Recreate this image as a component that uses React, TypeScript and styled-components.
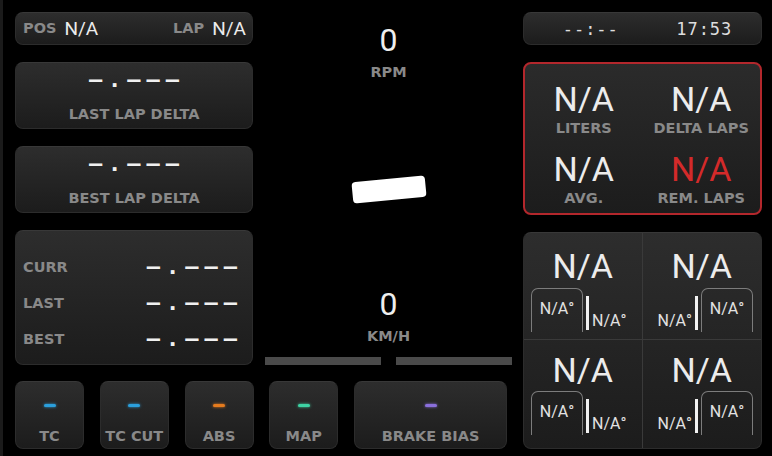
import React from 'react'
import styled, { createGlobalStyle } from 'styled-components'

const labelFont = `'DejaVu Sans', 'Liberation Sans', sans-serif`
const valueFont = `Roboto, 'Liberation Sans', sans-serif`
const monoFont = `'DejaVu Sans Mono', 'Liberation Mono', monospace`

const GlobalStyle = createGlobalStyle`
  html, body {
    margin: 0;
    padding: 0;
    background: #000;
  }
  * {
    box-sizing: border-box;
  }
`

const Dash = styled.div`
  display: flex;
  width: 772px;
  height: 456px;
  padding: 12px 10px 7px 12px;
  border-left: 3px solid #1b1b1b;
  background: #000;
  overflow: hidden;
`

const Main = styled.div`
  display: flex;
  flex-direction: column;
  gap: 16px;
  width: 497px;
`

const TopArea = styled.div`
  display: flex;
  gap: 12px;
  height: 353px;
`

const LeftCol = styled.div`
  display: flex;
  flex-direction: column;
  gap: 17px;
  width: 238px;
`

const Panel = styled.div`
  background: linear-gradient(180deg, #2d2d2d 0%, #1c1c1c 100%);
  border: 1px solid #2c2c2c;
  border-top-color: #383838;
  border-radius: 8px;
`

const Label = styled.span`
  font-family: ${labelFont};
  font-weight: bold;
  font-size: 14.5px;
  line-height: 14px;
  color: #898989;
  white-space: nowrap;
`

const PosBar = styled(Panel)`
  display: flex;
  align-items: center;
  height: 33px;
  padding: 0 6px 0 7px;
`

const InlineValue = styled.span`
  margin-left: 8px;
  font-family: ${valueFont};
  font-size: 19px;
  color: #ececec;
`

const Spacer = styled.div`
  flex: 1;
`

const DeltaCard = styled(Panel)`
  display: flex;
  flex-direction: column;
  align-items: center;
  height: 68px;
  padding-top: 6px;
`

const DashValue = styled.span`
  font-family: ${monoFont};
  font-weight: bold;
  font-size: 22px;
  line-height: 22px;
  letter-spacing: 6px;
  margin-right: -6px;
  color: #f0f0f0;
  white-space: pre;
`

const CardLabel = styled(Label)`
  margin-top: 16px;
`

const TimesCard = styled(Panel)`
  display: flex;
  flex-direction: column;
  flex: 1;
  padding: 18px 15px 7px 7px;
`

const TimeRow = styled.div`
  display: flex;
  align-items: center;
  justify-content: space-between;
  height: 36px;
`

const CenterCol = styled.div`
  display: flex;
  flex-direction: column;
  align-items: center;
  flex: 1;
`

const Readout = styled.div<{ $top: number }>`
  margin-top: ${({ $top }) => $top}px;
  font-family: ${valueFont};
  font-size: 32px;
  line-height: 32px;
  color: #eeeeee;
`

const UnitLabel = styled(Label)`
  margin-top: 9px;
`

const NeedleIcon = styled.svg`
  display: block;
  margin-top: 96px;
`

const SpeedBars = styled.div`
  display: flex;
  gap: 15px;
  align-self: stretch;
  margin-top: 14px;
`

const SpeedBar = styled.div`
  flex: 1;
  height: 8px;
  background: #4a4a4a;
`

const ButtonRow = styled.div`
  display: flex;
  justify-content: space-between;
  width: 492px;
  height: 68px;
`

const ControlButton = styled(Panel)<{ $wide?: boolean }>`
  display: flex;
  flex-direction: column;
  align-items: center;
  width: ${({ $wide }) => ($wide ? 153 : 69)}px;
  padding-top: 22px;
`

const Indicator = styled.span<{ $color: string }>`
  width: 12px;
  height: 3px;
  border-radius: 2px;
  background: ${({ $color }) => $color};
  box-shadow: 0 0 3px ${({ $color }) => $color};
`

const ButtonLabel = styled(Label)`
  margin-top: 22px;
`

const RightCol = styled.div`
  display: flex;
  flex-direction: column;
  gap: 17px;
  width: 239px;
  margin-left: 11px;
`

const ClockBar = styled(Panel)`
  display: grid;
  grid-template-columns: 1fr 1fr;
  align-items: center;
  justify-items: center;
  height: 33px;
  padding-left: 10px;
  font-family: ${monoFont};
  font-size: 17px;
  letter-spacing: 1px;
  color: #dddddd;
`

const FuelCard = styled.div`
  display: grid;
  grid-template-columns: 1fr 1fr;
  align-content: start;
  row-gap: 17px;
  height: 153px;
  padding-top: 18px;
  background: linear-gradient(180deg, #2b2b2b 0%, #1c1c1c 100%);
  border: 2px solid #b3272c;
  border-radius: 8px;
`

const FuelCell = styled.div`
  display: flex;
  flex-direction: column;
  align-items: center;
`

const BigValue = styled.span<{ $alert?: boolean }>`
  font-family: ${valueFont};
  font-size: 34px;
  line-height: 34px;
  color: ${({ $alert }) => ($alert ? '#d42a2a' : '#ececec')};
`

const FuelLabel = styled(Label)`
  margin-top: 5px;
`

const TyreCard = styled(Panel)`
  display: grid;
  grid-template-columns: 1fr 1fr;
  grid-template-rows: 107px 1fr;
  flex: 1;
  overflow: hidden;
`

const TyreCell = styled.div<{ $right?: boolean; $bottom?: boolean }>`
  display: flex;
  flex-direction: column;
  align-items: center;
  padding: ${({ $bottom }) => ($bottom ? '13px 0 13px' : '16px 0 7px')};
  border-right: ${({ $right }) => ($right ? 'none' : '1px solid #3a3a3a')};
  border-bottom: ${({ $bottom }) => ($bottom ? 'none' : '1px solid #3a3a3a')};
`

const TyreDetail = styled.div<{ $mirror?: boolean }>`
  display: flex;
  flex-direction: ${({ $mirror }) => ($mirror ? 'row-reverse' : 'row')};
  align-items: flex-end;
  gap: 3px;
  align-self: stretch;
  margin-top: auto;
  padding: ${({ $mirror }) => ($mirror ? '0 8px 0 0' : '0 0 0 7px')};
`

const TempBox = styled.div`
  width: 52px;
  height: 44px;
  padding-top: 12px;
  border: 1.5px solid #7c7c7c;
  border-bottom: none;
  border-radius: 7px 7px 0 0;
  text-align: center;
  font-family: ${valueFont};
  font-size: 16px;
  line-height: 16px;
  color: #e2e2e2;
`

const TempBar = styled.div`
  width: 3px;
  height: 34px;
  margin-bottom: 2px;
  background: #f2f2f2;
`

const TempText = styled.span`
  margin-bottom: 3px;
  font-family: ${valueFont};
  font-size: 16px;
  line-height: 16px;
  color: #e2e2e2;
`

const controls = [
  { label: 'TC', color: '#2b9fdc' },
  { label: 'TC CUT', color: '#2b9fdc' },
  { label: 'ABS', color: '#e57b1e' },
  { label: 'MAP', color: '#3ed3a4' },
  { label: 'BRAKE BIAS', color: '#8a6fdc', wide: true },
]

const fuel = [
  { label: 'LITERS' },
  { label: 'DELTA LAPS' },
  { label: 'AVG.' },
  { label: 'REM. LAPS', alert: true },
]

const tyres = [
  { right: false, bottom: false },
  { right: true, bottom: false },
  { right: false, bottom: true },
  { right: true, bottom: true },
]

const EMPTY_TIME = '–.–––'

export default function App() {
  return (
    <>
      <GlobalStyle />
      <Dash>
        <Main>
          <TopArea>
            <LeftCol>
              <PosBar>
                <Label>POS</Label>
                <InlineValue>N/A</InlineValue>
                <Spacer />
                <Label>LAP</Label>
                <InlineValue>N/A</InlineValue>
              </PosBar>
              <DeltaCard>
                <DashValue>{EMPTY_TIME}</DashValue>
                <CardLabel>LAST LAP DELTA</CardLabel>
              </DeltaCard>
              <DeltaCard>
                <DashValue>{EMPTY_TIME}</DashValue>
                <CardLabel>BEST LAP DELTA</CardLabel>
              </DeltaCard>
              <TimesCard>
                {['CURR', 'LAST', 'BEST'].map((name) => (
                  <TimeRow key={name}>
                    <Label>{name}</Label>
                    <DashValue>{EMPTY_TIME}</DashValue>
                  </TimeRow>
                ))}
              </TimesCard>
            </LeftCol>
            <CenterCol>
              <Readout $top={12}>0</Readout>
              <UnitLabel>RPM</UnitLabel>
              <NeedleIcon width="80" height="30" viewBox="0 0 80 30">
                <rect x="2" y="4" width="76" height="22" rx="4" fill="#fff" transform="rotate(-5.5 40 15)" />
              </NeedleIcon>
              <Readout $top={84}>0</Readout>
              <UnitLabel>KM/H</UnitLabel>
              <SpeedBars>
                <SpeedBar />
                <SpeedBar />
              </SpeedBars>
            </CenterCol>
          </TopArea>
          <ButtonRow>
            {controls.map((c) => (
              <ControlButton key={c.label} $wide={c.wide}>
                <Indicator $color={c.color} />
                <ButtonLabel>{c.label}</ButtonLabel>
              </ControlButton>
            ))}
          </ButtonRow>
        </Main>
        <RightCol>
          <ClockBar>
            <span>--:--</span>
            <span>17:53</span>
          </ClockBar>
          <FuelCard>
            {fuel.map((f) => (
              <FuelCell key={f.label}>
                <BigValue $alert={f.alert}>N/A</BigValue>
                <FuelLabel>{f.label}</FuelLabel>
              </FuelCell>
            ))}
          </FuelCard>
          <TyreCard>
            {tyres.map((t, i) => (
              <TyreCell key={i} $right={t.right} $bottom={t.bottom}>
                <BigValue>N/A</BigValue>
                <TyreDetail $mirror={t.right}>
                  <TempBox>N/A°</TempBox>
                  <TempBar />
                  <TempText>N/A°</TempText>
                </TyreDetail>
              </TyreCell>
            ))}
          </TyreCard>
        </RightCol>
      </Dash>
    </>
  )
}
